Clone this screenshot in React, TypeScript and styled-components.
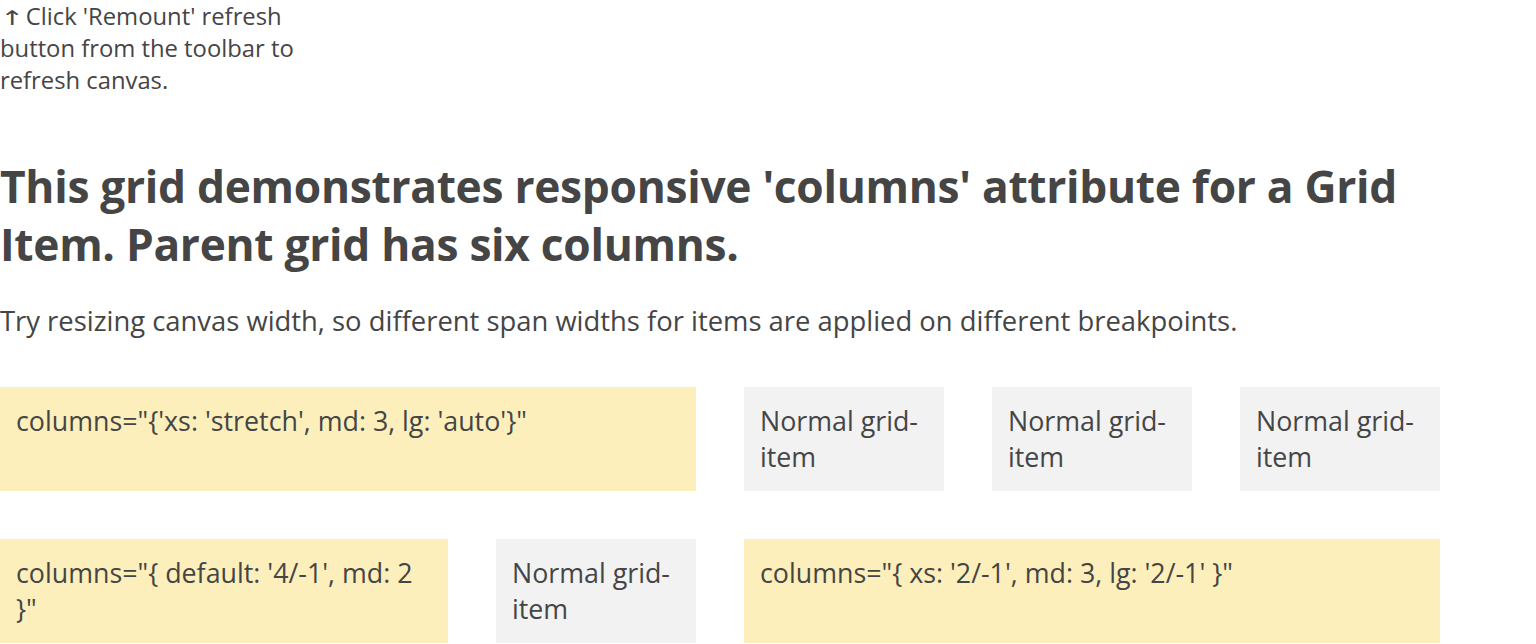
import React from "react";
import styled, { createGlobalStyle } from "styled-components";

const Global = createGlobalStyle`
  html, body { margin: 0; padding: 0; background: #ffffff; }
  body {
    font-family: "Open Sans", "Noto Sans", sans-serif;
    color: #454545;
    -webkit-font-smoothing: antialiased;
  }
`;

const Page = styled.main`
  display: flex;
  flex-direction: column;
  width: 1440px;
`;

const Hint = styled.p`
  margin: 0;
  width: 300px;
  font-size: 23.8px;
  line-height: 32px;
`;

const Arrow = styled.span`
  display: inline-block;
  font-family: "DejaVu Sans", sans-serif;
  font-size: 20px;
  line-height: 20px;
  margin: 0 5px 0 4px;
  transform: scaleX(1.45);
`;

const Title = styled.h2`
  margin: 61px 0 0;
  font-size: 44.3px;
  line-height: 58px;
  font-weight: 700;
  letter-spacing: -0.3px;
`;

const Lead = styled.p`
  margin: 30px 0 0;
  font-size: 27.4px;
  line-height: 36px;
`;

const Grid = styled.div`
  margin-top: 48px;
  display: grid;
  grid-template-columns: repeat(6, 200px);
  gap: 48px;
`;

const Item = styled.div<{ $span: number; $tone: "accent" | "plain" }>`
  grid-column: span ${(p) => p.$span};
  padding: 16px;
  font-size: 26.8px;
  line-height: 36px;
  background: ${(p) => (p.$tone === "accent" ? "#fcefbb" : "#f2f2f2")};
`;

const items: { span: number; tone: "accent" | "plain"; text: string }[] = [
  { span: 3, tone: "accent", text: `columns="{'xs: 'stretch', md: 3, lg: 'auto'}"` },
  { span: 1, tone: "plain", text: "Normal grid-item" },
  { span: 1, tone: "plain", text: "Normal grid-item" },
  { span: 1, tone: "plain", text: "Normal grid-item" },
  { span: 2, tone: "accent", text: `columns="{ default: '4/-1', md: 2 }"` },
  { span: 1, tone: "plain", text: "Normal grid-item" },
  { span: 3, tone: "accent", text: `columns="{ xs: '2/-1', md: 3, lg: '2/-1' }"` },
];

export default function App() {
  return (
    <>
      <Global />
      <Page>
        <Hint>
          <Arrow>↑</Arrow>Click 'Remount' refresh button from the toolbar to refresh canvas.
        </Hint>
        <Title>
          This grid demonstrates responsive 'columns' attribute for a Grid Item. Parent grid has six columns.
        </Title>
        <Lead>
          Try resizing canvas width, so different span widths for items are applied on different breakpoints.
        </Lead>
        <Grid>
          {items.map((it, i) => (
            <Item key={i} $span={it.span} $tone={it.tone}>
              {it.text}
            </Item>
          ))}
        </Grid>
      </Page>
    </>
  );
}
